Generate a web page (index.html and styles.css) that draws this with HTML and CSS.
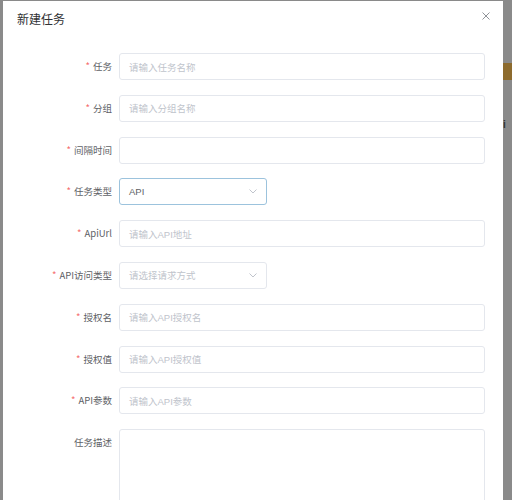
FILE: index.html
```html
<!DOCTYPE html>
<html lang="zh">
<head>
<meta charset="utf-8">
<title>新建任务</title>
<link rel="stylesheet" href="styles.css">
</head>
<body>
<div class="backdrop">
  <div class="bg-right">
    <span class="bg-orange"></span>
    <span class="bg-text">i</span>
  </div>
  <div class="dialog">
    <div class="header">
      <span class="title">新建任务</span>
      <span class="close">
        <svg width="8" height="8" viewBox="0 0 8 8"><path d="M0.5 0.5L7.5 7.5M7.5 0.5L0.5 7.5" stroke="#909399" stroke-width="1" fill="none"/></svg>
      </span>
    </div>
    <form class="form">
      <div class="row"><label class="label"><i>*</i>任务</label><div class="input"><span class="ph">请输入任务名称</span></div></div>
      <div class="row"><label class="label"><i>*</i>分组</label><div class="input"><span class="ph">请输入分组名称</span></div></div>
      <div class="row"><label class="label"><i>*</i>间隔时间</label><div class="input"></div></div>
      <div class="row"><label class="label"><i>*</i>任务类型</label><div class="input select focus"><span class="val">API</span>
        <svg class="arrow" width="8" height="5" viewBox="0 0 8 5"><path d="M0.5 0.5L4 4L7.5 0.5" stroke="#c0c4cc" stroke-width="1" fill="none"/></svg></div></div>
      <div class="row"><label class="label"><i>*</i>ApiUrl</label><div class="input"><span class="ph">请输入API地址</span></div></div>
      <div class="row"><label class="label"><i>*</i>API访问类型</label><div class="input select"><span class="ph">请选择请求方式</span>
        <svg class="arrow" width="8" height="5" viewBox="0 0 8 5"><path d="M0.5 0.5L4 4L7.5 0.5" stroke="#c0c4cc" stroke-width="1" fill="none"/></svg></div></div>
      <div class="row"><label class="label"><i>*</i>授权名</label><div class="input"><span class="ph">请输入API授权名</span></div></div>
      <div class="row"><label class="label"><i>*</i>授权值</label><div class="input"><span class="ph">请输入API授权值</span></div></div>
      <div class="row"><label class="label"><i>*</i>API参数</label><div class="input"><span class="ph">请输入API参数</span></div></div>
      <div class="row"><label class="label">任务描述</label><div class="input textarea"></div></div>
    </form>
  </div>
</div>
</body>
</html>
```
FILE: styles.css
```css
html, body {
  margin: 0;
  padding: 0;
  height: 500px;
  overflow: hidden;
  background: #8a8a8a;
  font-family: "Liberation Sans", "Noto Sans CJK SC", sans-serif;
}
.backdrop {
  position: relative;
  height: 500px;
  padding-top: 1px;
  padding-left: 3px;
  box-sizing: border-box;
}
.bg-right {
  position: absolute;
  left: 503px;
  top: 0;
  width: 9px;
  height: 500px;
}
.bg-orange {
  position: absolute;
  top: 63px;
  left: 0;
  width: 9px;
  height: 17px;
  background: #8d6b2e;
}
.bg-text {
  position: absolute;
  top: 119px;
  left: 0;
  font-size: 10px;
  font-weight: bold;
  color: #333;
}
.dialog {
  width: 500px;
  height: 520px;
  background: #fff;
  box-sizing: border-box;
}
.header {
  display: flex;
  justify-content: space-between;
  align-items: flex-start;
  padding: 10px 10px 0 14px;
  height: 39px;
  box-sizing: border-box;
}
.title {
  font-size: 12px;
  line-height: 16px;
  color: #303133;
  font-family: "Noto Sans CJK SC", sans-serif;
}
.close {
  margin-top: 1px;
  margin-right: 3px;
  display: flex;
}
.form {
  margin: 13px 0 0 0;
  padding: 0 18px 0 0;
}
.row {
  display: flex;
  align-items: flex-start;
  margin-bottom: 14.8px;
}
.label {
  width: 109px;
  padding-right: 7px;
  box-sizing: content-box;
  text-align: right;
  font-size: 9.5px;
  line-height: 27px;
  color: #606266;
  font-family: "Noto Sans CJK SC", sans-serif;
  white-space: nowrap;
}
.label i {
  font-style: normal;
  color: #f56c6c;
  margin-right: 3px;
}
.input {
  flex: 1;
  height: 27px;
  border: 1px solid #e4e7ed;
  border-radius: 3px;
  box-sizing: border-box;
  padding: 0 9px;
  display: flex;
  align-items: center;
  font-size: 9.5px;
  font-family: "Liberation Sans", "Noto Sans CJK SC", sans-serif;
}
.ph {
  color: #c0c4cc;
}
.val {
  color: #606266;
}
.select {
  flex: 0 0 148px;
  justify-content: space-between;
  padding-right: 9px;
}
.select.focus {
  border-color: #9cc3dd;
}
.textarea {
  height: 90px;
}
```
